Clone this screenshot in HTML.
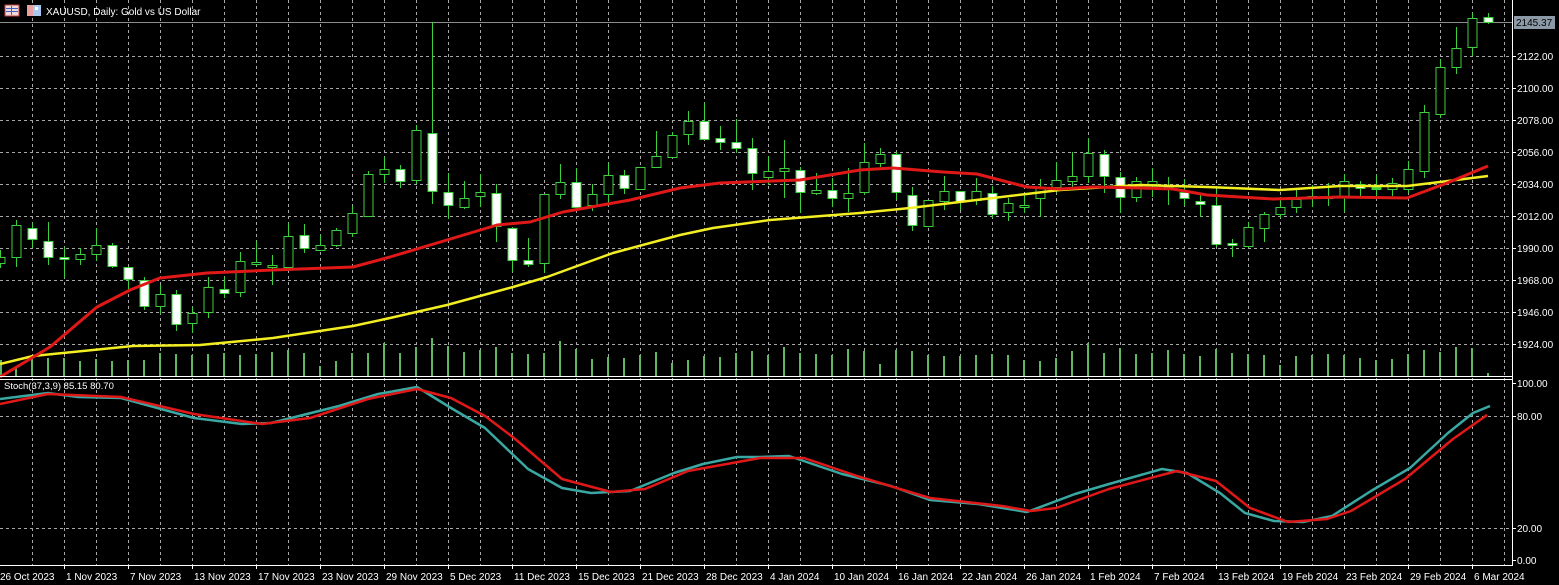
<!DOCTYPE html>
<html><head><meta charset="utf-8"><style>
html,body{margin:0;padding:0;background:#000;width:1559px;height:585px;overflow:hidden}
svg{display:block}
text{font-family:"Liberation Sans",sans-serif;font-size:10px;fill:#fff}
.b{fill:#000;stroke:#3ccf3c;stroke-width:1}
.w{fill:#fff;stroke:#3ccf3c;stroke-width:1}
.wk{stroke:#3ccf3c;stroke-width:1}
.v{stroke:#62b862;stroke-width:2}
.g{stroke:#a8a8a8;stroke-width:1;stroke-dasharray:3,3;fill:none}
</style></head><body>
<svg width="1559" height="585" viewBox="0 0 1559 585" xmlns="http://www.w3.org/2000/svg">
<rect width="1559" height="585" fill="#000"/>
<!-- grid vertical -->
<path class="g" d="M32.5 0V565M64.5 0V565M96.5 0V565M128.5 0V565M160.5 0V565M192.5 0V565M224.5 0V565M256.5 0V565M288.5 0V565M320.5 0V565M352.5 0V565M384.5 0V565M416.5 0V565M448.5 0V565M480.5 0V565M512.5 0V565M544.5 0V565M576.5 0V565M608.5 0V565M640.5 0V565M672.5 0V565M704.5 0V565M736.5 0V565M768.5 0V565M800.5 0V565M832.5 0V565M864.5 0V565M896.5 0V565M928.5 0V565M960.5 0V565M992.5 0V565M1024.5 0V565M1056.5 0V565M1088.5 0V565M1120.5 0V565M1152.5 0V565M1184.5 0V565M1216.5 0V565M1248.5 0V565M1280.5 0V565M1312.5 0V565M1344.5 0V565M1376.5 0V565M1408.5 0V565M1440.5 0V565M1472.5 0V565M1504.5 0V565"/>
<path class="g" d="M0 56.5H1512M0 88.5H1512M0 120.5H1512M0 152.5H1512M0 184.5H1512M0 216.5H1512M0 248.5H1512M0 280.5H1512M0 312.5H1512M0 344.5H1512M0 416.5H1512M0 528.5H1512"/>
<!-- price line -->
<line x1="0" y1="22.5" x2="1512" y2="22.5" stroke="#8c8c8c" stroke-width="1"/>
<!-- volumes -->
<path class="v" d="M1 376V360M16 376V367M32 376V357M48 376V358M64 376V358M80 376V361M96 376V359M112 376V361M128 376V360M144 376V360M160 376V353M176 376V354M192 376V355M208 376V354M224 376V353M240 376V355M256 376V354M272 376V352M288 376V350M304 376V353M320 376V366M336 376V361M352 376V353M368 376V353M384 376V343M400 376V353M416 376V347M432 376V338M448 376V346M464 376V352M480 376V350M496 376V347M512 376V353M528 376V354M544 376V353M560 376V341M576 376V349M592 376V359M608 376V357M624 376V358M640 376V355M656 376V352M672 376V363M688 376V360M704 376V356M720 376V357M736 376V353M752 376V351M768 376V355M784 376V347M800 376V353M816 376V354M832 376V355M848 376V349M864 376V351M880 376V364M896 376V350M912 376V351M928 376V355M944 376V356M960 376V356M976 376V355M992 376V354M1008 376V355M1024 376V360M1040 376V361M1056 376V358M1072 376V351M1088 376V343M1104 376V353M1120 376V348M1136 376V354M1152 376V353M1168 376V350M1184 376V354M1200 376V356M1216 376V349M1232 376V353M1248 376V354M1264 376V355M1280 376V365M1296 376V356M1312 376V355M1328 376V354M1344 376V355M1360 376V358M1376 376V360M1392 376V359M1408 376V354M1424 376V350M1440 376V352M1456 376V347M1472 376V348M1488 376V373"/>
<!-- wicks -->
<path class="wk" d="M0.5 250V268M16.5 220V267M32.5 223V248M48.5 222V265M64.5 247V278M80.5 248V265M96.5 228V261M112.5 243V268M128.5 267V290M144.5 277V310M160.5 285V314M176.5 290V331M192.5 307V333M208.5 277V318M224.5 277V298M240.5 252V297M256.5 241V266M272.5 255V285M288.5 223V267M304.5 224V253M320.5 235V251M336.5 228V247M352.5 206V237M368.5 171V217M384.5 157V183M400.5 165V188M416.5 125V184M432.5 22V204M448.5 173V219M464.5 181V209M480.5 174V207M496.5 184V242M512.5 227V272M528.5 238V267M544.5 194V273M560.5 164V199M576.5 168V208M592.5 184V211M608.5 163V203M624.5 170V194M640.5 167V190M656.5 131V167M672.5 132V157M688.5 111V145M704.5 103V140M720.5 126V150M736.5 119V153M752.5 138V190M768.5 156V185M784.5 140V198M800.5 167V213M816.5 173V195M832.5 178V207M848.5 168V212M864.5 143V195M880.5 148V167M896.5 152V200M912.5 187V231M928.5 200V226M944.5 176V210M960.5 191V210M976.5 178V205M992.5 186V218M1008.5 198V221M1024.5 195V213M1040.5 179V217M1056.5 162V193M1072.5 152V190M1088.5 138V183M1104.5 150V193M1120.5 172V213M1136.5 177V202M1152.5 168V197M1168.5 177V205M1184.5 179V206M1200.5 195V217M1216.5 189V247M1232.5 239V257M1248.5 222V248M1264.5 212V242M1280.5 197V218M1296.5 190V213M1312.5 185V207M1328.5 183V206M1344.5 174V212M1360.5 181V196M1376.5 175V197M1392.5 178V196M1408.5 161V193M1424.5 105V178M1440.5 59V118M1456.5 27V74M1472.5 13V56M1488.5 13V24"/>
<!-- bodies -->
<g>
<rect class="b" x="-4" y="257.5" width="9" height="6"/>
<rect class="b" x="12" y="225.5" width="9" height="32"/>
<rect class="w" x="28" y="228.5" width="9" height="11"/>
<rect class="w" x="44" y="241.5" width="9" height="16"/>
<rect class="w" x="60" y="257.5" width="9" height="2"/>
<rect class="b" x="76" y="254.5" width="9" height="5"/>
<rect class="b" x="92" y="245.5" width="9" height="9"/>
<rect class="w" x="108" y="245.5" width="9" height="21"/>
<rect class="w" x="124" y="267.5" width="9" height="12"/>
<rect class="w" x="140" y="280.5" width="9" height="26"/>
<rect class="b" x="156" y="294.5" width="9" height="12"/>
<rect class="w" x="172" y="294.5" width="9" height="30"/>
<rect class="b" x="188" y="313.5" width="9" height="10"/>
<rect class="b" x="204" y="287.5" width="9" height="25"/>
<rect class="w" x="220" y="289.5" width="9" height="4"/>
<rect class="b" x="236" y="261.5" width="9" height="31"/>
<rect class="b" x="252" y="262.5" width="9" height="2"/>
<rect class="b" x="268" y="265.5" width="9" height="2"/>
<rect class="b" x="284" y="236.5" width="9" height="31"/>
<rect class="w" x="300" y="235.5" width="9" height="13"/>
<rect class="b" x="316" y="245.5" width="9" height="5"/>
<rect class="b" x="332" y="230.5" width="9" height="15"/>
<rect class="b" x="348" y="213.5" width="9" height="20"/>
<rect class="b" x="364" y="174.5" width="9" height="42"/>
<rect class="b" x="380" y="169.5" width="9" height="5"/>
<rect class="w" x="396" y="169.5" width="9" height="12"/>
<rect class="b" x="412" y="130.5" width="9" height="50"/>
<rect class="w" x="428" y="133.5" width="9" height="58"/>
<rect class="w" x="444" y="192.5" width="9" height="13"/>
<rect class="b" x="460" y="198.5" width="9" height="9"/>
<rect class="b" x="476" y="192.5" width="9" height="4"/>
<rect class="w" x="492" y="193.5" width="9" height="33"/>
<rect class="w" x="508" y="228.5" width="9" height="32"/>
<rect class="w" x="524" y="260.5" width="9" height="4"/>
<rect class="b" x="540" y="194.5" width="9" height="69"/>
<rect class="b" x="556" y="182.5" width="9" height="12"/>
<rect class="w" x="572" y="182.5" width="9" height="25"/>
<rect class="b" x="588" y="194.5" width="9" height="11"/>
<rect class="b" x="604" y="175.5" width="9" height="19"/>
<rect class="w" x="620" y="175.5" width="9" height="13"/>
<rect class="b" x="636" y="167.5" width="9" height="22"/>
<rect class="b" x="652" y="156.5" width="9" height="11"/>
<rect class="b" x="668" y="135.5" width="9" height="22"/>
<rect class="b" x="684" y="121.5" width="9" height="13"/>
<rect class="w" x="700" y="121.5" width="9" height="18"/>
<rect class="w" x="716" y="138.5" width="9" height="4"/>
<rect class="w" x="732" y="142.5" width="9" height="6"/>
<rect class="w" x="748" y="148.5" width="9" height="25"/>
<rect class="b" x="764" y="171.5" width="9" height="6"/>
<rect class="b" x="780" y="168.5" width="9" height="3"/>
<rect class="w" x="796" y="170.5" width="9" height="22"/>
<rect class="b" x="812" y="190.5" width="9" height="3"/>
<rect class="w" x="828" y="190.5" width="9" height="8"/>
<rect class="b" x="844" y="193.5" width="9" height="5"/>
<rect class="b" x="860" y="162.5" width="9" height="30"/>
<rect class="b" x="876" y="154.5" width="9" height="9"/>
<rect class="w" x="892" y="154.5" width="9" height="38"/>
<rect class="w" x="908" y="195.5" width="9" height="30"/>
<rect class="b" x="924" y="200.5" width="9" height="26"/>
<rect class="b" x="940" y="191.5" width="9" height="10"/>
<rect class="w" x="956" y="191.5" width="9" height="10"/>
<rect class="b" x="972" y="191.5" width="9" height="9"/>
<rect class="w" x="988" y="193.5" width="9" height="21"/>
<rect class="b" x="1004" y="203.5" width="9" height="9"/>
<rect class="b" x="1020" y="205.5" width="9" height="2"/>
<rect class="b" x="1036" y="187.5" width="9" height="11"/>
<rect class="b" x="1052" y="180.5" width="9" height="7"/>
<rect class="b" x="1068" y="176.5" width="9" height="5"/>
<rect class="b" x="1084" y="153.5" width="9" height="23"/>
<rect class="w" x="1100" y="154.5" width="9" height="22"/>
<rect class="w" x="1116" y="177.5" width="9" height="20"/>
<rect class="b" x="1132" y="181.5" width="9" height="16"/>
<rect class="b" x="1148" y="181.5" width="9" height="3"/>
<rect class="b" x="1164" y="185.5" width="9" height="2"/>
<rect class="w" x="1180" y="192.5" width="9" height="6"/>
<rect class="w" x="1196" y="201.5" width="9" height="3"/>
<rect class="w" x="1212" y="205.5" width="9" height="39"/>
<rect class="w" x="1228" y="243.5" width="9" height="2"/>
<rect class="b" x="1244" y="227.5" width="9" height="19"/>
<rect class="b" x="1260" y="214.5" width="9" height="14"/>
<rect class="b" x="1276" y="207.5" width="9" height="7"/>
<rect class="b" x="1292" y="199.5" width="9" height="8"/>
<rect class="b" x="1308" y="196.5" width="9" height="2"/>
<rect class="b" x="1324" y="196.5" width="9" height="2"/>
<rect class="b" x="1340" y="181.5" width="9" height="16"/>
<rect class="w" x="1356" y="184.5" width="9" height="4"/>
<rect class="b" x="1372" y="187.5" width="9" height="2" style="fill:#3ccf3c"/>
<rect class="b" x="1388" y="183.5" width="9" height="6"/>
<rect class="b" x="1404" y="169.5" width="9" height="20"/>
<rect class="b" x="1420" y="112.5" width="9" height="59"/>
<rect class="b" x="1436" y="67.5" width="9" height="47"/>
<rect class="b" x="1452" y="48.5" width="9" height="19"/>
<rect class="b" x="1468" y="18.5" width="9" height="29"/>
<rect class="b" x="1484" y="17.5" width="9" height="5" style="fill:#e8ffe8"/>
</g>
<!-- MAs -->
<polyline fill="none" stroke="#f2ee22" stroke-width="2.5" stroke-linejoin="round" points="0,364 33,356 133,346 200,345 273,338 353,326 390,318 447,305 513,287 547,277 613,253 680,235 713,228 770,220 860,213 910,208 993,198 1060,190 1140,185 1207,187 1280,190 1340,186 1407,186 1440,182 1488,176"/>
<polyline fill="none" stroke="#e01818" stroke-width="3" stroke-linejoin="round" points="0,377 50,347 97,307 130,290 160,278 207,273 273,270 353,267 390,257 447,240 497,225 530,222 563,212 630,200 680,188 720,183 800,180 860,170 893,168 943,172 977,174 1027,187 1060,189 1093,187 1140,188 1173,189 1207,195 1273,199 1340,197 1407,198 1447,183 1488,166"/>
<!-- pane separators / axes -->
<line x1="0" y1="376.5" x2="1513" y2="376.5" stroke="#fff"/>
<line x1="0" y1="379.5" x2="1513" y2="379.5" stroke="#fff"/>
<line x1="0" y1="565.5" x2="1513" y2="565.5" stroke="#fff"/>
<line x1="1512.5" y1="0" x2="1512.5" y2="566" stroke="#fff"/>
<!-- stoch -->
<polyline fill="none" stroke="#3aa8a2" stroke-width="2.5" stroke-linejoin="round" points="0,399 48,393 78,397 121,398 194,418 242,424 271,423 339,406 378,394 417,387 451,408 485,428 528,469 562,488 591,493 630,491 674,473 703,464 737,457 760,457 789,456 842,474 891,486 930,500 978,504 1027,512 1075,494 1109,484 1162,469 1187,473 1220,493 1245,513 1274,521 1303,522 1332,516 1371,491 1410,468 1448,433 1473,413 1490,406"/>
<polyline fill="none" stroke="#e01818" stroke-width="2.5" stroke-linejoin="round" points="0,404 48,394 121,397 194,414 262,424 310,418 368,399 417,389 451,398 485,416 514,438 562,479 611,492 645,489 688,471 760,458 804,458 857,476 930,498 1002,506 1031,511 1056,508 1109,489 1177,471 1216,481 1250,508 1288,522 1327,519 1351,511 1405,479 1453,439 1487,415"/>
<text x="4" y="389" style="font-size:9.5px">Stoch(37,3,9) 85.15 80.70</text>
<!-- axis ticks -->
<path stroke="#fff" d="M1512 56.5h4M1512 88.5h4M1512 120.5h4M1512 152.5h4M1512 184.5h4M1512 216.5h4M1512 248.5h4M1512 280.5h4M1512 312.5h4M1512 344.5h4M1512 383.5h4M1512 416.5h4M1512 528.5h4M1512 560.5h4"/>
<g>
<text x="1517" y="60">2122.00</text>
<text x="1517" y="92">2100.00</text>
<text x="1517" y="124">2078.00</text>
<text x="1517" y="156">2056.00</text>
<text x="1517" y="188">2034.00</text>
<text x="1517" y="220">2012.00</text>
<text x="1517" y="252">1990.00</text>
<text x="1517" y="284">1968.00</text>
<text x="1517" y="316">1946.00</text>
<text x="1517" y="348">1924.00</text>
<text x="1517" y="387">100.00</text>
<text x="1517" y="420">80.00</text>
<text x="1517" y="532">20.00</text>
<text x="1517" y="564">0.00</text>
</g>
<rect x="1514" y="16" width="41" height="13" fill="#8c9aa8"/>
<text x="1516" y="26" style="fill:#000">2145.37</text>
<!-- dates -->
<path stroke="#fff" d="M64.5 565v4M128.5 565v4M192.5 565v4M256.5 565v4M320.5 565v4M384.5 565v4M448.5 565v4M512.5 565v4M576.5 565v4M640.5 565v4M704.5 565v4M768.5 565v4M832.5 565v4M896.5 565v4M960.5 565v4M1024.5 565v4M1088.5 565v4M1152.5 565v4M1216.5 565v4M1280.5 565v4M1344.5 565v4M1408.5 565v4M1472.5 565v4"/>
<g>
<text x="0" y="580">26 Oct 2023</text>
<text x="66" y="580">1 Nov 2023</text>
<text x="130" y="580">7 Nov 2023</text>
<text x="194" y="580">13 Nov 2023</text>
<text x="258" y="580">17 Nov 2023</text>
<text x="322" y="580">23 Nov 2023</text>
<text x="386" y="580">29 Nov 2023</text>
<text x="450" y="580">5 Dec 2023</text>
<text x="514" y="580">11 Dec 2023</text>
<text x="578" y="580">15 Dec 2023</text>
<text x="642" y="580">21 Dec 2023</text>
<text x="706" y="580">28 Dec 2023</text>
<text x="770" y="580">4 Jan 2024</text>
<text x="834" y="580">10 Jan 2024</text>
<text x="898" y="580">16 Jan 2024</text>
<text x="962" y="580">22 Jan 2024</text>
<text x="1026" y="580">26 Jan 2024</text>
<text x="1090" y="580">1 Feb 2024</text>
<text x="1154" y="580">7 Feb 2024</text>
<text x="1218" y="580">13 Feb 2024</text>
<text x="1282" y="580">19 Feb 2024</text>
<text x="1346" y="580">23 Feb 2024</text>
<text x="1410" y="580">29 Feb 2024</text>
<text x="1474" y="580">6 Mar 2024</text>
</g>
<!-- title icons -->
<rect x="5" y="5" width="14" height="11" fill="#f0d8d8" stroke="#c04040"/>
<path d="M6 8.5h12M6 11.5h12M11.5 6v9" stroke="#4060c0" stroke-width="1"/>
<rect x="27" y="5" width="6" height="11" fill="#e8a0a0"/>
<rect x="33" y="5" width="8" height="11" fill="#a8c8f0"/>
<rect x="35" y="7" width="3" height="3" fill="#fff"/>
<text x="46" y="15">XAUUSD, Daily:  Gold vs US Dollar</text>
</svg>
</body></html>
